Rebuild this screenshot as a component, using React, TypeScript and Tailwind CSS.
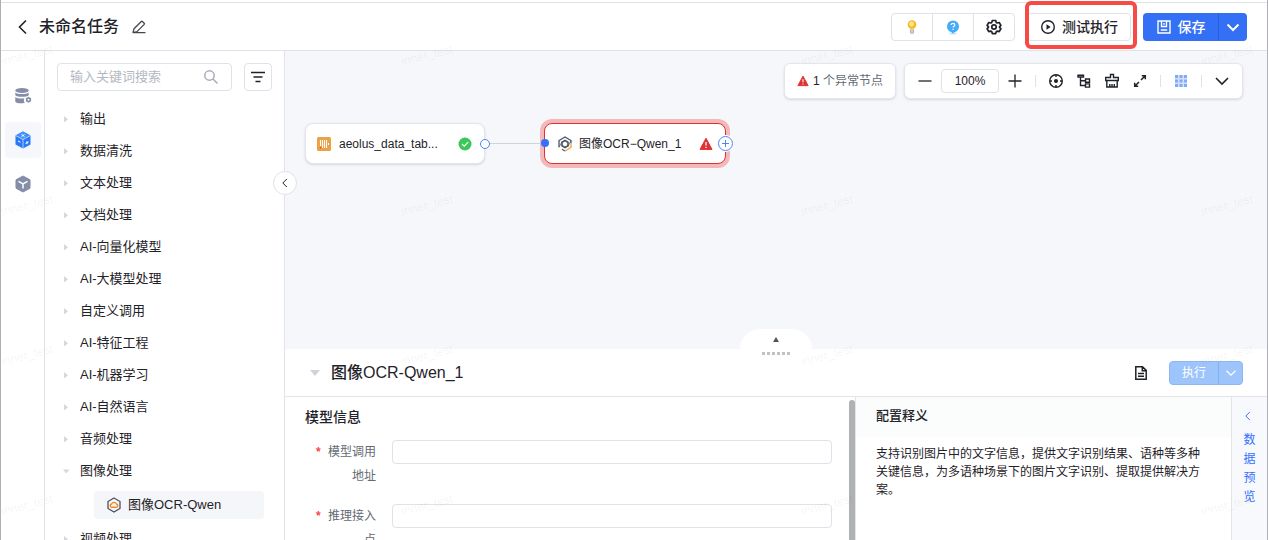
import React from 'react';

const categories = ['输出', '数据清洗', '文本处理', '文档处理', 'AI-向量化模型', 'AI-大模型处理', '自定义调用', 'AI-特征工程', 'AI-机器学习', 'AI-自然语言', '音频处理'];

type IconProps = { className?: string };

function Chevron({ className = '', dir = 'down' }: IconProps & { dir?: 'down' | 'left' }) {
  return (
    <svg viewBox="0 0 16 16" className={className} fill="none" stroke="currentColor" strokeWidth="1.6" aria-hidden="true">
      {dir === 'down' ? <path d="M2 5l6 6 6-6" /> : <path d="M11 1.5L4.5 8l6.5 6.5" />}
    </svg>
  );
}

function Caret({ open = false }: { open?: boolean }) {
  return (
    <svg viewBox="0 0 8 8" className="size-2 shrink-0 text-[#d5d8de]" fill="currentColor" aria-hidden="true">
      {open ? <path d="M1 2.5h6.5L4.2 6.5z" /> : <path d="M2 1l4 3.2L2 7.5z" />}
    </svg>
  );
}

function Warning({ className }: IconProps) {
  return (
    <svg viewBox="0 0 14 14" className={className} aria-hidden="true">
      <path d="M7 1.2L13 12.4H1z" fill="#e03131" stroke="#e03131" strokeLinejoin="round" />
      <path d="M7 5v3.5M7 9.8v1.3" stroke="#fff" strokeWidth="1.3" />
    </svg>
  );
}

function Gear({ className }: IconProps) {
  return (
    <svg viewBox="0 0 16 16" className={className} fill="none" stroke="currentColor" strokeWidth="1.7" strokeLinejoin="round" aria-hidden="true">
      <path d="M6.3 1.5h3.4l.5 1.9 1.1.6 1.9-.5 1.7 2.9-1.4 1.5v.4l1.4 1.4-1.7 2.9-1.9-.5-1.1.6-.5 1.9H6.3l-.5-1.9-1.1-.6-1.9.5-1.7-2.9 1.4-1.4v-.4L1.1 6.4l1.7-2.9 1.9.5 1.1-.6z" />
      <circle cx="8" cy="8" r="2.2" />
    </svg>
  );
}

function Watermarks() {
  return (
    <div aria-hidden="true" className="pointer-events-none absolute inset-0 z-50 overflow-hidden">
      {[45, 195, 345, 495].map((top) =>
        [-2, 398, 798, 1198].map((left) => (
          <span key={`${top}-${left}`} className="absolute w-14 -rotate-[14deg] text-center text-xs leading-5 text-black/6" style={{ top, left }}>
            inner_test
          </span>
        )),
      )}
    </div>
  );
}

function Header() {
  return (
    <header className="flex h-[49px] shrink-0 items-center border-y border-[#dfe2e8] bg-white pr-5 pl-[14px]">
      <button aria-label="返回" className="text-[#1f2329]"><Chevron dir="left" className="size-4" /></button>
      <h1 className="ml-2 text-base font-medium">未命名任务</h1>
      <button aria-label="编辑名称" className="ml-3 text-[#42464e]">
        <svg viewBox="0 0 16 16" className="size-4" fill="none" stroke="currentColor" strokeWidth="1.3" strokeLinejoin="round"><path d="M2 13.700l1-4 7.300-7.200a.8.8 0 0 1 1.100 0l1.800 1.800a.8.8 0 0 1 0 1.100L6 12.600zM2 13.700h12.500" /></svg>
      </button>
      <div className="ml-auto flex h-7 rounded border border-[#dfe2e8]">
        <button aria-label="提示" className="grid w-10 place-items-center">
          <svg viewBox="0 0 16 16" className="size-4"><circle cx="8" cy="5.500" r="4.300" fill="#f6b923" /><circle cx="7.600" cy="5" r="2.400" fill="#ffe98a" /><path d="M5.800 8.500h4.400v2H5.800z" fill="#f3c64b" /><path d="M6 10.500h4v3.200l-1 1.300H7l-1-1.300z" fill="#aeb3bb" /><path d="M7.500 10.500h1v4h-1z" fill="#e9ebee" /></svg>
        </button>
        <button aria-label="帮助" className="grid w-[42px] place-items-center border-x border-[#dfe2e8]">
          <svg viewBox="0 0 16 16" className="size-4"><ellipse cx="8" cy="14.500" rx="4" ry="1" fill="#cbe5fb" /><circle cx="8" cy="7.500" r="6" fill="#45adf7" /><path d="M6.500 13h3L8 14.800z" fill="#45adf7" /><path d="M6.200 6c0-2.300 3.600-2.200 3.600 0 0 1.300-1.700 1.300-1.700 2.600M8.100 9.700v1.200" fill="none" stroke="#fff" strokeWidth="1.200" /></svg>
        </button>
        <button aria-label="设置" className="grid w-10 place-items-center"><Gear className="size-4" /></button>
      </div>
      <div className="relative ml-3">
        <button className="flex h-7 w-[104px] items-center justify-end gap-[6px] rounded border border-[#dfe2e8] pr-3 text-sm font-medium">
          <svg viewBox="0 0 16 16" className="size-4" fill="none" stroke="currentColor" strokeWidth="1.4"><circle cx="8" cy="8" r="6.300" /><path d="M6.500 5.300L10.600 8l-4.100 2.700z" fill="currentColor" stroke="none" /></svg>
          测试执行
        </button>
        <i aria-hidden="true" className="pointer-events-none absolute -top-3 -right-[6px] -bottom-2 -left-[2px] z-10 rounded-md border-4 border-[#f54a45]" />
      </div>
      <div className="ml-3 flex h-7 overflow-hidden rounded bg-[#3370f5] text-sm font-medium text-white">
        <button className="flex w-[76px] items-center justify-center gap-[6px] border-r border-[#2860dc]">
          <svg viewBox="0 0 16 16" className="size-4" fill="none" stroke="currentColor" strokeWidth="1.4"><path d="M2 2h12v12H2zM5.500 2v5.500h5V2M4.800 11h6.400M8 4v1.800" /></svg>
          保存
        </button>
        <button aria-label="更多保存选项" className="grid w-7 place-items-center">
          <svg viewBox="0 0 16 16" className="size-4" fill="none" stroke="currentColor" strokeWidth="2"><path d="M2.500 5.500L8 11l5.500-5.500" /></svg>
        </button>
      </div>
    </header>
  );
}

function Rail() {
  return (
    <nav className="flex w-11 shrink-0 flex-col items-center gap-2 border-r border-[#e1e4ea] pt-[27px] pl-px text-[#858da8]">
      <button aria-label="数据源" className="grid size-9 place-items-center">
        <svg viewBox="0 0 18 18" className="size-[18px]" fill="currentColor"><ellipse cx="8" cy="3.500" rx="6.700" ry="2.500" /><path d="M1.300 5.500c2 2 11.400 2 13.400 0v2.700c-2 2-11.400 2-13.400 0zM1.300 10c2 1.700 6 1.900 9 1.300a4 4 0 0 0 .5 4.400c-3 1.100-8 .8-9.500-1z" /><path d="M14.500 9.800l2.600 1.500v3l-2.600 1.500-2.600-1.500v-3z" /><circle cx="14.500" cy="12.800" r="1" fill="#fff" /></svg>
      </button>
      <button aria-label="算子" className="grid size-9 place-items-center rounded bg-[#f5f7fa]">
        <svg viewBox="0 0 18 18" className="size-[18px]"><path d="M9 .5l7.500 4v9L9 17.500l-7.500-4v-9z" fill="#2878f8" /><path d="M9 .5l7.500 4L9 8.500l-7.500-4z" fill="#3e92fb" /><path d="M1.500 4.500L9 8.500l7.500-4M9 8.500v9" stroke="#cfe3ff" fill="none" strokeWidth=".8" /><path d="M7.500 3.500l3 2M10.500 3.500l-3 2M4 10l2.500 1.200M11.500 12.400l3-1.500M13 10.200v3" stroke="#fff" fill="none" /></svg>
      </button>
      <button aria-label="模型" className="grid size-9 place-items-center">
        <svg viewBox="0 0 18 18" className="size-[18px]"><path d="M9 1l7 3.800v8.400L9 17l-7-3.800V4.800z" fill="currentColor" stroke="currentColor" strokeLinejoin="round" /><path d="M4.500 6.300L9 8.800l4.500-2.500M9 8.800v4.700" stroke="#fff" strokeWidth="1.500" fill="none" /></svg>
      </button>
    </nav>
  );
}

function CategoryPanel() {
  return (
    <aside className="relative w-60 shrink-0 border-r border-[#e1e4ea] text-[13px]">
      <div className="flex gap-3 pt-3 pr-3 pl-3">
        <div className="flex h-7 min-w-0 flex-1 items-center rounded border border-[#dfe2e8] px-3">
          <input aria-label="输入关键词搜索" placeholder="输入关键词搜索" className="min-w-0 flex-1 bg-transparent outline-none placeholder:text-[#b4b8c2]" />
          <svg viewBox="0 0 16 16" className="size-4 text-[#a8acb9]" fill="none" stroke="currentColor" strokeWidth="1.5"><circle cx="6.500" cy="6.500" r="4.700" /><path d="M10 10l4.500 4.500" /></svg>
        </div>
        <button aria-label="筛选" className="grid size-7 place-items-center rounded border border-[#dfe2e8]">
          <svg viewBox="0 0 16 16" className="size-4" stroke="currentColor" strokeWidth="1.600"><path d="M1 3.500h14M3.500 8h9M5.500 12.500h5" /></svg>
        </button>
      </div>
      <ul className="pt-3">
        {categories.map((name) => (
          <li key={name}><button className="flex h-8 w-full items-center gap-[10px] pl-[17px] text-left"><Caret />{name}</button></li>
        ))}
        <li>
          <button className="flex h-8 w-full items-center gap-[10px] pl-[17px] text-left"><Caret open />图像处理</button>
          <button className="mt-1 mb-1 ml-[49px] flex h-7 w-[170px] items-center gap-[6px] rounded bg-[#f5f6f9] pl-3 text-left">
            <svg viewBox="0 0 16 16" className="size-4" fill="none"><path d="M8 1l6 3.500v7L8 15l-6-3.500v-7z" stroke="#4c5264" strokeWidth="1.300" /><path d="M5.500 10.300a1.700 1.700 0 0 1 .1-3.300 2.600 2.600 0 0 1 4.800 0 1.700 1.700 0 0 1 .1 3.300z" stroke="#f28a18" strokeWidth="1.400" /></svg>
            图像OCR-Qwen
          </button>
        </li>
        <li><button className="flex h-8 w-full items-center gap-[10px] pl-[17px] text-left"><Caret />视频处理</button></li>
      </ul>
      <button aria-label="收起面板" className="absolute top-[120px] -right-[13px] z-10 grid size-6 place-items-center rounded-full border border-[#dfe2e8] bg-white"><Chevron dir="left" className="size-[10px]" /></button>
    </aside>
  );
}

function Toolbar() {
  const tool = 'grid size-7 place-items-center';
  return (
    <div className="absolute top-3 right-6 flex gap-2 text-xs">
      <div className="flex h-9 items-center gap-1 rounded-md border border-[#e3e6eb] bg-white px-3 text-[#646a73] shadow-sm">
        <Warning className="size-3" /><span><span className="text-[#1f2329]">1</span> 个异常节点</span>
      </div>
      <div className="flex h-9 items-center rounded-md border border-[#e3e6eb] bg-white px-[6px] shadow-sm">
        <button aria-label="缩小" className={tool}><svg viewBox="0 0 16 16" className="size-4" stroke="currentColor" strokeWidth="1.300"><path d="M1.500 8h13" /></svg></button>
        <input aria-label="缩放比例" defaultValue="100%" className="mx-[2px] h-6 w-[58px] rounded border border-[#dfe2e8] text-center" />
        <button aria-label="放大" className={tool}><svg viewBox="0 0 16 16" className="size-4" stroke="currentColor" strokeWidth="1.300"><path d="M1.500 8h13M8 1.500v13" /></svg></button>
        <i className="mx-[6px] h-3 w-px bg-[#dfe2e8]" />
        <button aria-label="定位" className={tool}><svg viewBox="0 0 16 16" className="size-4" fill="none" stroke="currentColor" strokeWidth="1.400"><circle cx="8" cy="8" r="6.300" /><circle cx="8" cy="8" r="1.300" fill="currentColor" /><path d="M8 2v2M8 12v2M2 8h2M12 8h2" /></svg></button>
        <button aria-label="布局" className={tool}><svg viewBox="0 0 16 16" className="size-4" fill="none" stroke="currentColor" strokeWidth="1.400"><path d="M2 2.200h5.500v1.800H2zM4.500 4v8.500H9M4.500 7.700H9M9.500 6h4v3.300h-4zM9.500 10.900h4v3.200h-4z" /></svg></button>
        <button aria-label="清理" className={tool}><svg viewBox="0 0 16 16" className="size-4" fill="none" stroke="currentColor" strokeWidth="1.400"><path d="M6.500 4.500v-3h3v3h4.800v3H1.700v-3zM2.800 7.500V14h10.400V7.500M5.800 14v-3M8 14v-3M10.300 14v-3" /></svg></button>
        <button aria-label="全屏" className={tool}><svg viewBox="0 0 16 16" className="size-4" fill="none" stroke="currentColor" strokeWidth="1.500"><path d="M9.800 2.700h3.500v3.500M13.300 2.700L9 7M6.200 13.300H2.700V9.800M2.700 13.300L7 9" /></svg></button>
        <i className="mx-[6px] h-3 w-px bg-[#dfe2e8]" />
        <button aria-label="网格" className={tool}><svg viewBox="0 0 16 16" className="size-4" fill="#82a9fa"><path d="M2 2h3v3H2zM6.500 2h3v3h-3zM11 2h3v3h-3zM2 6.500h3v3H2zM6.500 6.500h3v3h-3zM11 6.500h3v3h-3zM2 11h3v3H2zM6.500 11h3v3h-3zM11 11h3v3h-3z" /><path d="M2 2h12v12H2z" fillOpacity=".35" /></svg></button>
        <i className="mx-[6px] h-3 w-px bg-[#dfe2e8]" />
        <button aria-label="展开工具" className={tool}><Chevron className="size-4" /></button>
      </div>
    </div>
  );
}

function Canvas() {
  return (
    <section className="relative h-[298px] shrink-0 bg-[#f6f7fa]">
      <Toolbar />
      <svg aria-hidden="true" className="absolute top-[92px] left-[200px] h-px w-[60px]"><path d="M0 .5h60" stroke="#cfd3da" /></svg>
      <div className="absolute top-[72px] left-5 flex h-[41px] w-[180px] items-center rounded-lg border border-[#e1e4ea] bg-white pr-3 pl-[11px] text-xs shadow-sm">
        <svg viewBox="0 0 14 14" className="size-[14px]"><rect width="14" height="14" rx="1.500" fill="#e9a246" /><path d="M3.500 3v6M5.500 3v8M7.500 3v8M9.500 3v8M11.500 6v2" stroke="#fff" strokeWidth="1.100" /><path d="M2.800 10h1.400v1.500H2.800z" fill="#e64c35" /></svg>
        <span className="ml-2">aeolus_data_tab...</span>
        <svg viewBox="0 0 14 14" className="ml-auto size-[14px]"><circle cx="7" cy="7" r="6.500" fill="#3cc75a" /><path d="M4 7l2.200 2.200L10.200 5.200" fill="none" stroke="#fff" strokeWidth="1.200" /></svg>
        <i className="absolute top-[15px] -right-[6px] size-[10px] rounded-full border border-[#4c82fb] bg-white" />
      </div>
      <div className="absolute top-[72px] left-[259px] flex h-[41px] w-[182px] items-center rounded-lg border border-[#e03131] bg-white pr-3 pl-3 text-xs ring-4 ring-[#f3b9ba]">
        <svg viewBox="0 0 16 16" className="size-4" fill="none" strokeWidth="1.300"><path d="M2 11V4.500L8 1l6 3.500v3M5 13.300L8 15" stroke="#4c5264" /><path d="M14 8v3.500L8 15" stroke="#f1a13a" /><path d="M8 4.500l3 1.700v3.600l-3 1.700-3-1.700V6.200z" stroke="#4c5264" strokeWidth="1.600" /><path d="M2 11.500L5 5.500M11 10.500l3-6" stroke="#4c5264" strokeWidth=".7" /></svg>
        <span className="ml-[6px]">图像OCR−Qwen_1</span>
        <Warning className="ml-auto size-[14px]" />
        <i className="absolute top-[15px] -left-[4px] size-2 rounded-full bg-[#3370ff]" />
        <button aria-label="添加节点" className="absolute top-3 -right-2 grid size-[15px] place-items-center rounded-full border border-[#4c82fb] bg-white text-[#4c82fb] ring-1 ring-white"><svg viewBox="0 0 9 9" className="size-[9px]" stroke="currentColor"><path d="M1 4.500h7M4.500 1v7" /></svg></button>
      </div>
    </section>
  );
}

function Field({ id, label }: { id: string; label: string }) {
  return (
    <div className="flex h-16 items-start gap-4">
      <label htmlFor={id} className="flex w-[71px] shrink-0 gap-1 pl-[11px] text-right text-xs leading-6 text-[#646a73]">
        <span className="w-2 shrink-0 text-left font-bold text-[#f54a45]">*</span><span className="w-12 shrink-0">{label}</span>
      </label>
      <input id={id} className="h-6 min-w-0 flex-1 rounded border border-[#dfe2e8] px-2 text-xs" />
    </div>
  );
}

function DetailPanel() {
  return (
    <section className="relative flex min-h-0 flex-1 flex-col bg-white">
      <button aria-label="展开面板" className="absolute -top-5 left-[455px] flex h-8 w-[72px] flex-col items-center gap-[10px] rounded-t-[20px] bg-white pt-2">
        <svg viewBox="0 0 6 5" className="h-[5px] w-[6px]"><path d="M0 5l3-5 3 5z" fill="#51565d" /></svg>
        <span className="flex gap-[2px]">{[0, 1, 2, 3, 4, 5].map((n) => <i key={n} className="size-[3px] bg-[#c0c2c6]" />)}</span>
      </button>
      <div className="flex h-12 shrink-0 items-center border-b border-[#e1e4ea] px-6">
        <svg viewBox="0 0 10 8" className="ml-px h-2 w-[10px]"><path d="M0 1h10L5 7z" fill="#d0d3d9" /></svg>
        <h2 className="ml-[11px] text-base font-medium">图像OCR-Qwen_1</h2>
        <button aria-label="文档" className="ml-auto"><svg viewBox="0 0 16 16" className="size-4" fill="none" stroke="currentColor" strokeWidth="1.500"><path d="M2.800 1.700h6.700l3.700 3.700v8.900H2.800zM9.300 1.700v4h4M5 8.500h6M5 11.300h6" /></svg></button>
        <div className="ml-5 flex h-6 overflow-hidden rounded border border-[#8bb8f5] bg-[#9dc4fb] text-xs text-white">
          <button className="w-[49px] border-r border-[#7fb0f2]">执行</button>
          <button aria-label="更多执行选项" className="grid w-[23px] place-items-center"><Chevron className="size-3" /></button>
        </div>
      </div>
      <div className="flex min-h-0 flex-1">
        <form className="flex min-w-0 flex-1">
          <div className="min-w-0 flex-1 overflow-hidden pt-3 pr-[17px] pl-5">
            <h3 className="mb-[15px] text-sm leading-4 font-medium">模型信息</h3>
            <Field id="model-url" label="模型调用地址" />
            <Field id="endpoint" label="推理接入点" />
          </div>
          <i className="mt-[3px] w-[6px] shrink-0 rounded-t-full bg-[#b0b1b3]" />
        </form>
        <article className="w-[377px] shrink-0 border-x border-[#e1e4ea]">
          <h3 className="h-10 bg-[#fbfdfc] pl-5 text-[13px] leading-[38px] font-medium">配置释义</h3>
          <p className="pt-2 pr-7 pl-5 text-xs leading-[18px]">支持识别图片中的文字信息，提供文字识别结果、语种等多种关键信息，为多语种场景下的图片文字识别、提取提供解决方案。</p>
        </article>
        <button aria-label="展开数据预览" className="flex w-[35px] shrink-0 flex-col items-center bg-[#f8f9fc] pt-[14px] text-xs leading-[19px] text-[#3370ff]">
          <Chevron dir="left" className="mr-1 mb-[10px] size-[10px]" />
          <span className="w-3">数据预览</span>
        </button>
      </div>
    </section>
  );
}

export default function App() {
  return (
    <div className="relative flex h-screen flex-col overflow-hidden border-x border-[#aeb0b5] bg-white pt-[2px] font-['Liberation_Sans','Noto_Sans_CJK_SC',sans-serif] text-[#1f2329]">
      <Header />
      <div className="flex min-h-0 flex-1">
        <Rail />
        <CategoryPanel />
        <main className="flex min-w-0 flex-1 flex-col"><Canvas /><DetailPanel /></main>
      </div>
      <Watermarks />
    </div>
  );
}
